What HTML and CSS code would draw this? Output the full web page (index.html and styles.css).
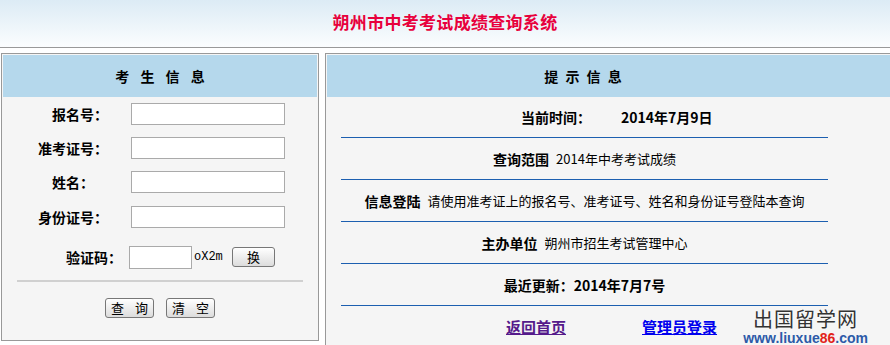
FILE: index.html
```html
<!DOCTYPE html>
<html lang="zh-CN">
<head>
  <meta charset="UTF-8">
  <meta name="viewport" content="width=device-width, initial-scale=1.0">
  <title>朔州市中考考试成绩查询系统</title>
  <link rel="stylesheet" href="styles.css">
</head>
<body>
  <header class="top">
    <h1>朔州市中考考试成绩查询系统</h1>
  </header>
  <main class="wrap">
    <form class="panel panel-left">
      <div class="panel-head">考 生 信 息</div>
      <div class="field">
        <label class="shift">报名号：</label>
        <input type="text" class="txt">
      </div>
      <div class="field">
        <label>准考证号：</label>
        <input type="text" class="txt">
      </div>
      <div class="field">
        <label>姓名：</label>
        <input type="text" class="txt">
      </div>
      <div class="field">
        <label>身份证号：</label>
        <input type="text" class="txt">
      </div>
      <div class="field field-code">
        <label>验证码：</label>
        <input type="text" class="txt txt-code">
        <span class="code">oX2m</span>
        <button type="button" class="btn btn-small">换</button>
      </div>
      <div class="sep"></div>
      <div class="actions">
        <button type="button" class="btn btn-wide">查 询</button>
        <button type="reset" class="btn btn-wide">清 空</button>
      </div>
    </form>
    <section class="panel panel-right">
      <div class="panel-head"><span>提 示 信 息</span></div>
      <div class="info">
        <div class="row row-first"><b>当前时间：</b><b class="date">2014年7月9日</b></div>
        <div class="row"><b>查询范围</b>2014年中考考试成绩</div>
        <div class="row"><b>信息登陆</b>请使用准考证上的报名号、准考证号、姓名和身份证号登陆本查询</div>
        <div class="row"><b>主办单位</b>朔州市招生考试管理中心</div>
        <div class="row"><b>最近更新：2014年7月7号</b></div>
        <div class="row row-links">
          <a href="#" class="visited">返回首页</a>
          <a href="#">管理员登录</a>
        </div>
      </div>
    </section>
  </main>
  <div class="mark">
    <div class="mark-cn">出国留学网</div>
    <div class="mark-url">www.liuxue<span>86</span>.com</div>
  </div>
</body>
</html>
```

FILE: styles.css
```css
/* 页面基础 */
html {
  overflow: hidden;
}

body {
  margin: 0;
  font-family: "Noto Sans CJK SC", sans-serif;
  font-size: 14px;
  color: #000;
  background: #fff;
  width: 890px;
  height: 345px;
  position: relative;
}

.top {
  height: 48px;
  background: linear-gradient(#dcebf5, #fbfdfe);
  border-bottom: 1px solid #999;
  box-sizing: border-box;
  text-align: center;
}

.top h1 {
  margin: 0;
  padding-top: 11px;
  font-size: 17px;
  line-height: 22px;
  color: #e8003c;
  letter-spacing: 0.3px;
}

.wrap {
  display: flex;
  gap: 6px;
  margin-top: 5px;
  padding-left: 1px;
  width: 940px;
}

.panel {
  margin: 0;
  border: 1px solid #999;
  padding: 1px;
  background: #f5f5f5;
  box-sizing: border-box;
}

.panel-left {
  width: 318px;
  height: 288px;
}

.panel-right {
  width: 600px;
  height: 300px;
}

.panel-head {
  height: 42px;
  line-height: 42px;
  background: #b5d8ec;
  font-weight: bold;
  font-size: 14px;
  text-align: center;
  letter-spacing: 2px;
}

.panel-left .panel-head {
  letter-spacing: 4px;
  text-indent: 4px;
}

.panel-right .panel-head span {
  display: block;
  width: 514px;
}

/* 考生信息 */
.field {
  display: flex;
  align-items: center;
  height: 34px;
}

.field:first-of-type {
  margin-top: 5px;
}

.field label {
  width: 112px;
  margin-left: 14px;
  text-align: center;
  font-weight: bold;
  font-size: 14px;
}

.field label.shift {
  padding-left: 14px;
  width: 98px;
}

.txt {
  margin: 0 0 0 2px;
  width: 154px;
  height: 22px;
  box-sizing: border-box;
  border: 1px solid #aaa;
  background: #fff;
  padding: 0 3px;
}

.field:nth-of-type(5) {
  height: 36px;
}

.field-code {
  margin-top: 2px;
  height: 40px;
}

.field-code label {
  width: auto;
  margin-left: 63px;
}

.txt-code {
  margin-left: 7px;
  width: 63px;
  height: 23px;
}

.code {
  font-family: "Liberation Mono", monospace;
  font-size: 12px;
  margin-left: 2px;
  width: 38px;
}

.btn {
  font-family: "Noto Sans CJK SC", sans-serif;
  font-size: 13px;
  line-height: 16px;
  height: 20px;
  width: 49px;
  padding: 0;
  border: 1px solid #777;
  border-radius: 3px;
  background: linear-gradient(#ffffff, #dcdcdc);
  color: #000;
  white-space: nowrap;
}

.btn-wide {
  word-spacing: 8px;
}

.btn-small {
  width: 43px;
  height: 20px;
}

.sep {
  margin: 3px 14px 0 14px;
  height: 2px;
  background: #d0d0d0;
}

.actions {
  display: flex;
  justify-content: center;
  gap: 12px;
  margin-top: 16px;
}

/* 提示信息 */
.info {
  margin-left: 14px;
  width: 487px;
}

.row {
  height: 41px;
  border-bottom: 1px solid #1c5fb0;
  display: flex;
  align-items: center;
  justify-content: center;
  gap: 7px;
  font-size: 13px;
}

.row b {
  font-size: 14px;
}

.row-first {
  height: 40px;
  justify-content: flex-start;
  padding-left: 180px;
  gap: 30px;
}

.row-links {
  border-bottom: none;
  justify-content: flex-start;
  padding-left: 165px;
  gap: 76px;
}

.row-links a {
  font-size: 15px;
  font-weight: bold;
  color: #0000ee;
  text-decoration: underline;
}

.row-links a.visited {
  color: #551a8b;
}

/* 水印 */
.mark {
  position: absolute;
  right: 22px;
  bottom: 0;
  text-align: center;
}

.mark-cn {
  font-size: 20px;
  line-height: 20px;
  margin-bottom: 2px;
  color: #333;
  letter-spacing: 1px;
  text-shadow: 0 0 2px #fff;
}

.mark-url {
  font-family: "Liberation Sans", sans-serif;
  font-size: 14px;
  font-weight: bold;
  line-height: 14px;
  color: #2c5aa8;
}

.mark-url span {
  color: #e2231a;
}
```
